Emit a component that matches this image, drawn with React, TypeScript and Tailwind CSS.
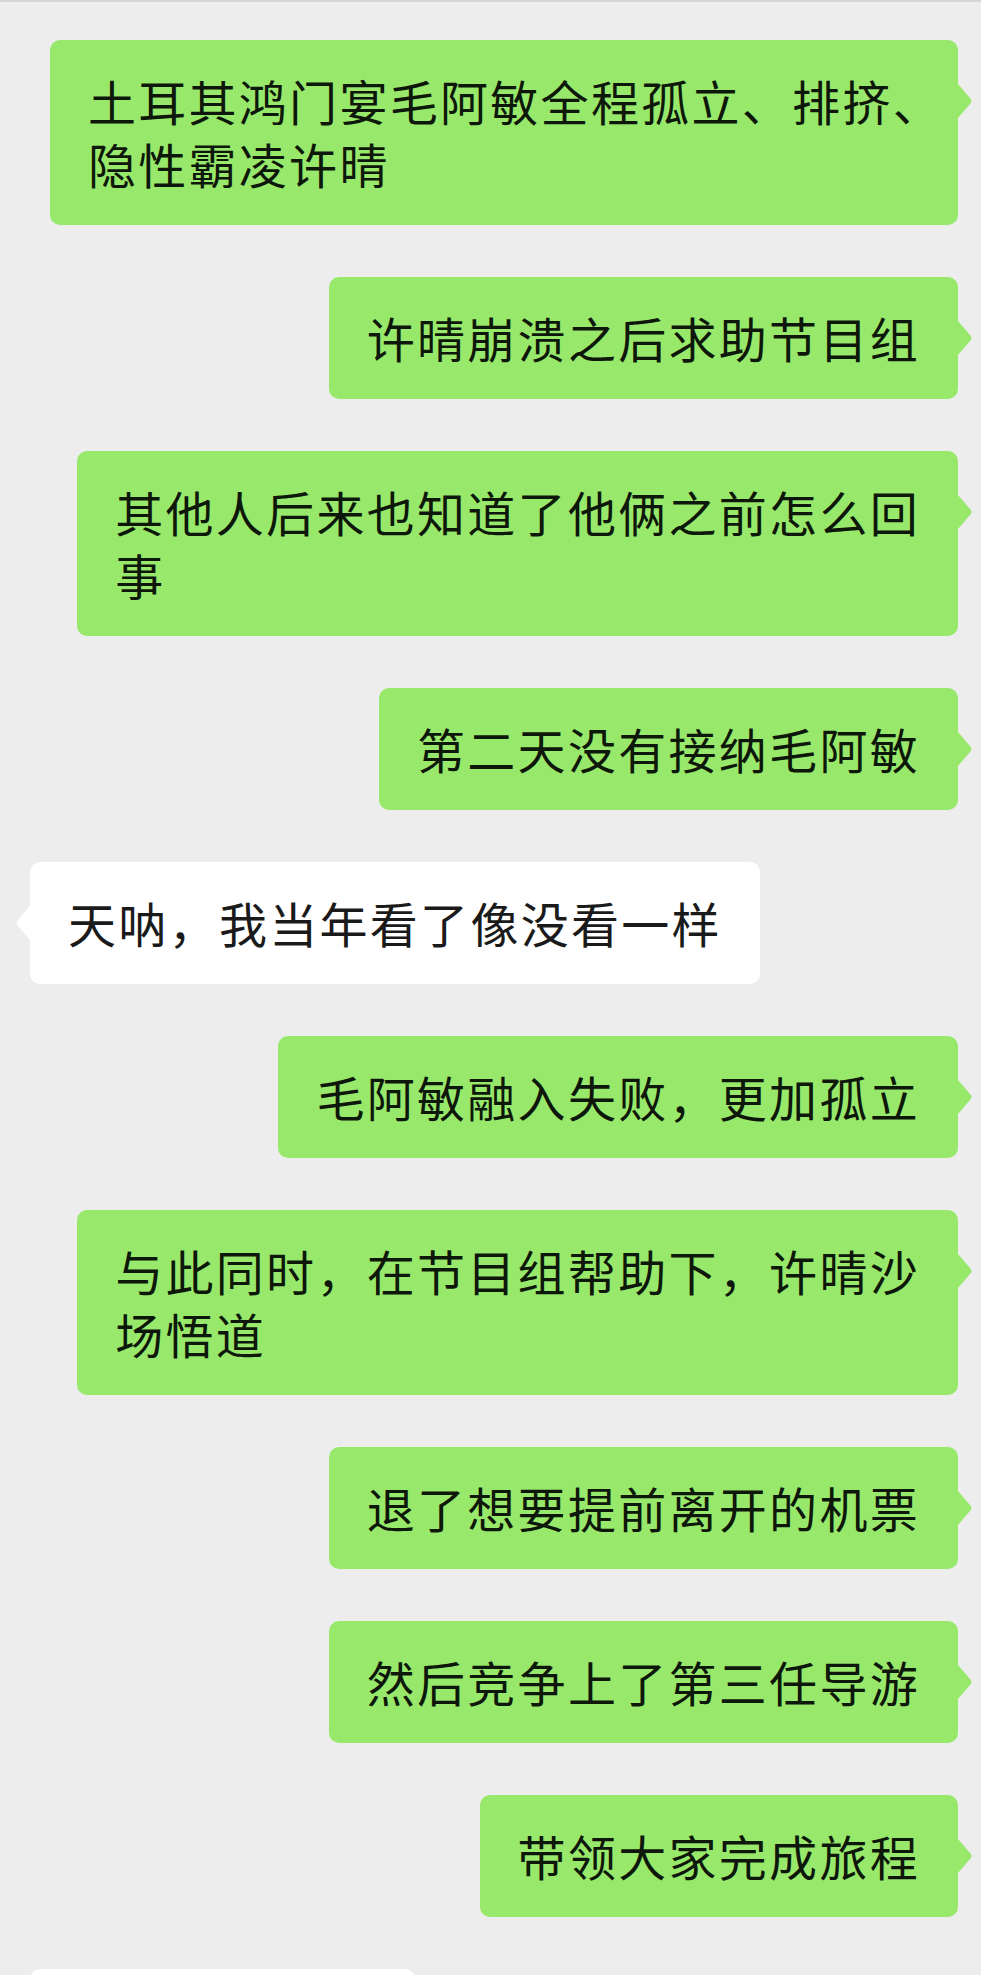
type Message = {
  id: number
  mine: boolean
  lines: string[]
  tightRight?: boolean
}

const messages: Message[] = [
  { id: 1, mine: true, lines: ['土耳其鸿门宴毛阿敏全程孤立、排挤、', '隐性霸凌许晴'], tightRight: true },
  { id: 2, mine: true, lines: ['许晴崩溃之后求助节目组'] },
  { id: 3, mine: true, lines: ['其他人后来也知道了他俩之前怎么回', '事'] },
  { id: 4, mine: true, lines: ['第二天没有接纳毛阿敏'] },
  { id: 5, mine: false, lines: ['天呐，我当年看了像没看一样'] },
  { id: 6, mine: true, lines: ['毛阿敏融入失败，更加孤立'] },
  { id: 7, mine: true, lines: ['与此同时，在节目组帮助下，许晴沙', '场悟道'] },
  { id: 8, mine: true, lines: ['退了想要提前离开的机票'] },
  { id: 9, mine: true, lines: ['然后竞争上了第三任导游'] },
  { id: 10, mine: true, lines: ['带领大家完成旅程'] },
]

function Tail({ mine }: { mine: boolean }) {
  // little pointer next to the first line, rounded at the tip
  if (mine) {
    return (
      <svg
        className="absolute left-full top-[44px] h-[34px] w-[16px]"
        viewBox="0 0 16 34"
        fill="#98e96b"
      >
        <path d="M0 0 L12 14 Q15 17 12 20 L0 34 Z" />
      </svg>
    )
  }
  return (
    <svg
      className="absolute right-full top-[44px] h-[34px] w-[16px]"
      viewBox="0 0 16 34"
      fill="#ffffff"
    >
      <path d="M16 0 L4 14 Q1 17 4 20 L16 34 Z" />
    </svg>
  )
}

function Bubble({ msg }: { msg: Message }) {
  const color = msg.mine ? 'bg-[#98e96b] text-[#0d170a]' : 'bg-white text-[#1a1a1a]'
  return (
    <div className={msg.mine ? 'flex justify-end pr-[23px]' : 'flex justify-start pl-[30px]'}>
      <div
        className={`relative w-fit rounded-[10px] pl-[38px] pt-[29px] pb-[30px] ${
          msg.tightRight ? 'pr-[15px]' : 'pr-[38px]'
        } ${color}`}
      >
        <Tail mine={msg.mine} />
        {msg.lines.map((line, i) => (
          <div key={i} className="whitespace-nowrap text-[48px] leading-[63px] tracking-[2.3px]">
            {line}
          </div>
        ))}
      </div>
    </div>
  )
}

export default function App() {
  return (
    <div
      className="h-[1975px] w-[981px] overflow-hidden bg-[#ededed]"
      style={{ fontFamily: '"Noto Sans CJK SC", "Noto Sans", sans-serif' }}
    >
      <div className="h-[2px] bg-[#d6d6d6]" />
      <div className="flex flex-col gap-[52px] pt-[38px]">
        {messages.map((m) => (
          <Bubble key={m.id} msg={m} />
        ))}
        {/* next message, cut off by the bottom edge */}
        <div className="flex justify-start pl-[30px]">
          <div className="h-[122px] w-[385px] rounded-[10px] bg-white" />
        </div>
      </div>
    </div>
  )
}
